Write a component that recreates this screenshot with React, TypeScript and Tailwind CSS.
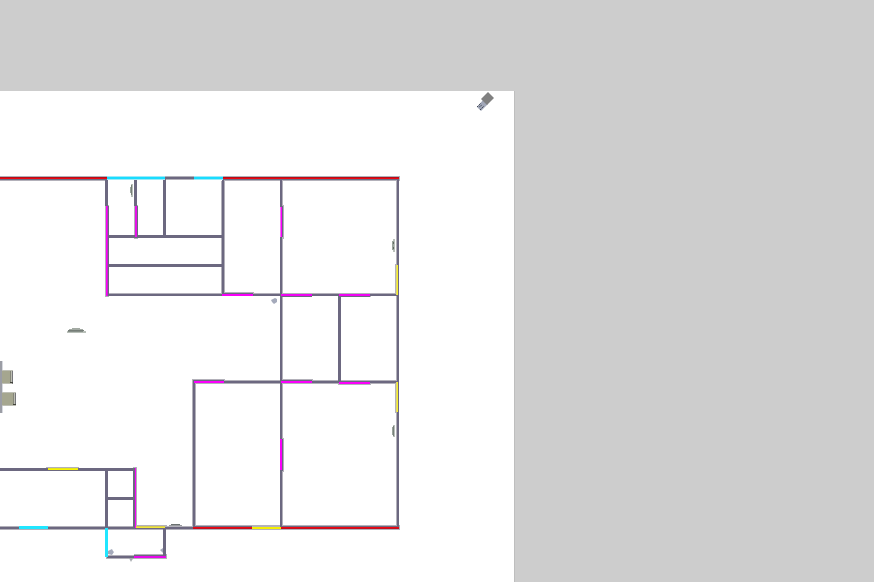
type Box = [x: number, y: number, width: number, height: number, color: string];

const WALL = '#6c6880';
const EDGE = '#b3b1ba';
const RED = '#ee0711';
const CYAN = '#19dcff';
const PALE_CYAN = '#9ceaf8';
const PINK = '#fb00fa';
const YELLOW = '#f5ee2c';

// Faint outlines beside walls and openings, drawn first.
const edges: Box[] = [
  [0, 176, 400, 5, EDGE],
  [105, 205, 4, 92, EDGE],
  [134, 205, 4, 34, EDGE],
  [221, 180, 4, 115, EDGE],
  [280, 180, 3, 348, EDGE],
  [280, 205, 4, 34, EDGE],
  [280, 438, 4, 34, EDGE],
  [396, 180, 3, 348, EDGE],
  [395, 264, 4, 32, EDGE],
  [395, 380, 4, 33, EDGE],
  [107, 293, 291, 3, EDGE],
  [221, 292, 33, 4, EDGE],
  [280, 293, 32, 4, EDGE],
  [338, 293, 33, 4, EDGE],
  [193, 380, 205, 4, EDGE],
  [192, 379, 33, 4, EDGE],
  [280, 379, 33, 4, EDGE],
  [338, 381, 33, 4, EDGE],
  [192, 381, 4, 146, EDGE],
  [0, 526, 193, 4, EDGE],
  [193, 525, 207, 5, EDGE],
  [46, 467, 33, 3, EDGE],
  [133, 467, 4, 62, EDGE],
  [135, 525, 32, 3, EDGE],
  [106, 555, 60, 4, EDGE],
  [134, 554, 33, 5, EDGE],
  [107, 180, 116, 1, '#ffffff'],
];

const walls: Box[] = [
  [0, 177, 399, 3, WALL],
  [165, 177, 29, 2, WALL],
  [165, 179, 29, 1, EDGE],
  [105, 179, 3, 27, WALL],
  [107, 206, 2, 90, WALL],
  [134, 179, 3, 27, WALL],
  [136, 206, 2, 31, WALL],
  [163, 179, 3, 58, WALL],
  [222, 179, 2, 116, WALL],
  [280, 179, 2, 348, WALL],
  [281, 206, 2, 31, WALL],
  [281, 439, 2, 32, WALL],
  [397, 179, 2, 349, WALL],
  [108, 235, 115, 3, WALL],
  [108, 264, 115, 3, WALL],
  [107, 294, 290, 2, WALL],
  [222, 293, 31, 2, WALL],
  [281, 295, 31, 2, WALL],
  [339, 295, 31, 2, WALL],
  [338, 295, 3, 88, WALL],
  [193, 381, 204, 2, WALL],
  [193, 380, 31, 2, WALL],
  [281, 380, 31, 2, WALL],
  [339, 382, 31, 2, WALL],
  [193, 381, 2, 146, WALL],
  [0, 468, 136, 3, WALL],
  [105, 470, 3, 58, WALL],
  [107, 497, 28, 3, WALL],
  [133, 469, 2, 60, WALL],
  [0, 527, 193, 2, WALL],
  [193, 526, 59, 1, WALL],
  [281, 526, 118, 1, WALL],
  [163, 528, 3, 28, WALL],
  [107, 556, 58, 2, WALL],
  [134, 555, 31, 1, WALL],
];

const openings: Box[] = [
  [0, 177, 107, 1, '#b50d18'],
  [0, 178, 107, 1, RED],
  [223, 177, 176, 1, '#b50d18'],
  [223, 178, 176, 1, RED],
  [107, 176, 58, 4, PALE_CYAN],
  [107, 177, 58, 2, CYAN],
  [194, 176, 29, 4, PALE_CYAN],
  [194, 177, 29, 2, CYAN],
  [106, 206, 1, 90, PINK],
  [107, 206, 1, 90, '#cd20cf'],
  [135, 206, 2, 31, '#e412e6'],
  [280, 207, 1, 30, '#f56cf5'],
  [281, 207, 1, 30, PINK],
  [280, 439, 2, 31, PINK],
  [222, 294, 31, 2, PINK],
  [281, 294, 31, 2, '#f005f2'],
  [339, 294, 31, 2, '#f005f2'],
  [194, 381, 30, 2, PINK],
  [281, 381, 31, 2, PINK],
  [339, 382, 31, 2, PINK],
  [396, 265, 1, 30, '#e0d870'],
  [397, 265, 1, 30, YELLOW],
  [396, 382, 1, 30, '#e0d870'],
  [397, 382, 1, 30, YELLOW],
  [193, 527, 59, 2, '#c30f20'],
  [281, 527, 118, 2, '#c30f20'],
  [193, 527, 59, 1, RED],
  [281, 527, 118, 1, RED],
  [252, 527, 29, 2, '#f5f000'],
  [48, 468, 30, 1, '#e6e41c'],
  [48, 469, 30, 1, '#f8f500'],
  [135, 468, 1, 60, PINK],
  [136, 526, 29, 1, '#d8cc50'],
  [136, 527, 29, 1, '#f0e63c'],
  [19, 526, 29, 3, '#20e6ff'],
  [105, 528, 3, 29, '#20e6ff'],
  [134, 556, 32, 2, '#e808eb'],
];

const chairs: Box[] = [
  [0, 361, 2, 52, '#9b9da5'],
  [2, 361, 1, 52, '#d7d9df'],
  [2, 370, 11, 14, '#bebfb5'],
  [2, 371, 8, 12, '#a5a68f'],
  [10, 371, 1, 12, '#858678'],
  [12, 371, 1, 13, '#77777b'],
  [10, 382, 3, 1, '#42433c'],
  [2, 392, 14, 14, '#bebfb5'],
  [2, 393, 11, 12, '#a5a68f'],
  [13, 393, 1, 12, '#858678'],
  [15, 393, 1, 12, '#77777b'],
  [13, 404, 3, 1, '#42433c'],
];

const lamps: Box[] = [
  [67, 331, 19, 2, '#b9c0b9'],
  [68, 331, 15, 1, '#858d87'],
  [68, 330, 16, 1, '#757d77'],
  [69, 329, 14, 1, '#a3aaa3'],
  [72, 328, 8, 1, '#a3aaa3'],
  [169, 525, 13, 1, '#999b9f'],
  [171, 524, 9, 1, '#6b7170'],
  [131, 184, 2, 13, '#bac0ba'],
  [130, 187, 2, 6, '#9aa49c'],
  [131, 185, 1, 10, '#798179'],
  [393, 239, 2, 13, '#bac0ba'],
  [392, 241, 2, 9, '#9aa49c'],
  [393, 242, 1, 2, '#606961'],
  [393, 247, 1, 2, '#606961'],
  [393, 425, 2, 12, '#bac0ba'],
  [392, 427, 2, 8, '#9aa49c'],
  [393, 426, 1, 10, '#78817a'],
];

function Boxes({ items }: { items: Box[] }) {
  return (
    <g shapeRendering="crispEdges">
      {items.map(([x, y, width, height, color], i) => (
        <rect key={i} x={x} y={y} width={width} height={height} fill={color} />
      ))}
    </g>
  );
}

function FloorPlan() {
  return (
    <svg className="block" width="514" height="491" viewBox="0 91 514 491" role="img" aria-label="Floor plan">
      <Boxes items={edges} />
      <Boxes items={walls} />
      <Boxes items={openings} />
      <Boxes items={chairs} />
      <Boxes items={lamps} />
      <g>
        <path d="M271 300l4-2 2 1v3l-3 2-2-2z" fill="#a5aabb" />
        <path d="M108 551l4-2 1 2 1 1-2 3-4-1z" fill="#a5aabb" />
        <path d="M160 550l3-2v5z" fill="#a5aabb" />
        <path d="M129 558h5l-2 2-1 2z" fill="#a5a9ad" />
      </g>
      <g>
        <path d="M477 107l6-7 5 4-7 7z" fill="#a1a7b8" />
        <path d="M481 99l7-7 6 6-7 7z" fill="#808080" />
        <path d="M477 107l4-4M480 110l4-4" stroke="#3f4552" strokeDasharray="2 1" fill="none" />
        <path d="M479 107l3-2" stroke="#626979" />
      </g>
    </svg>
  );
}

export default function App() {
  return (
    <main className="flex min-h-screen items-stretch overflow-hidden bg-[#cdcdcd] pt-[91px]">
      <section className="shrink-0 border-r border-[#bebebe] bg-white">
        <FloorPlan />
      </section>
    </main>
  );
}
